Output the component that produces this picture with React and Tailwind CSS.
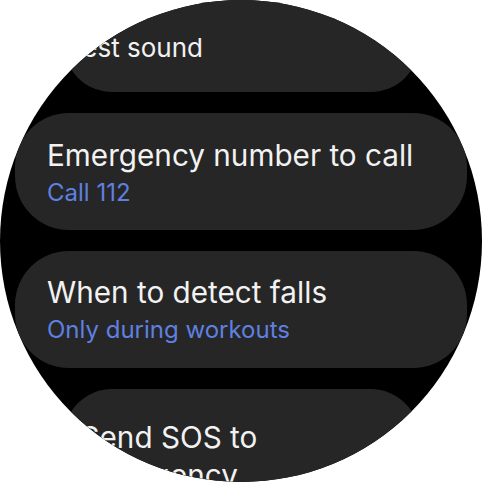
export default function App() {
  return (
    <div className="flex h-[482px] w-[482px] items-center justify-center bg-white">
      <div className="h-[482px] w-[482px] overflow-hidden rounded-full bg-black font-['Inter',sans-serif]">
        <div className="mt-[-24px] flex flex-col items-center gap-[21px]">
          {/* Test sound */}
          <div className="flex h-[116px] w-[355px] shrink-0 flex-col rounded-[48px] bg-[#262626] pl-[4px] pt-[56px]">
            <span className="text-[26px] leading-[32px] text-[#f2f2f2]">Test sound</span>
          </div>

          <div className="flex h-[117px] w-[452px] shrink-0 flex-col rounded-[54px] bg-[#262626] pl-[32px] pt-[24px]">
            <span className="text-[29.7px] leading-[36px] text-[#f2f2f2]">Emergency number to call</span>
            <span className="mt-[5px] text-[24px] leading-[30px] text-[#5f80e0]">Call 112</span>
          </div>

          <div className="flex h-[117px] w-[452px] shrink-0 flex-col rounded-[54px] bg-[#262626] pl-[32px] pt-[23px]">
            <span className="text-[29.7px] leading-[36px] text-[#f2f2f2]">When to detect falls</span>
            <span className="mt-[5px] text-[24px] leading-[30px] text-[#5f80e0]">Only during workouts</span>
          </div>

          <div className="flex h-[116px] w-[355px] shrink-0 flex-col rounded-[48px] bg-[#262626] pl-[17px] pt-[29px]">
            <span className="text-[29.7px] leading-[38px] text-[#f2f2f2]">Send SOS to</span>
            <span className="text-[29.7px] leading-[38px] text-[#f2f2f2]">emergency</span>
            <span className="text-[29.7px] leading-[38px] text-[#f2f2f2]">contacts</span>
          </div>
        </div>
      </div>
    </div>
  )
}
